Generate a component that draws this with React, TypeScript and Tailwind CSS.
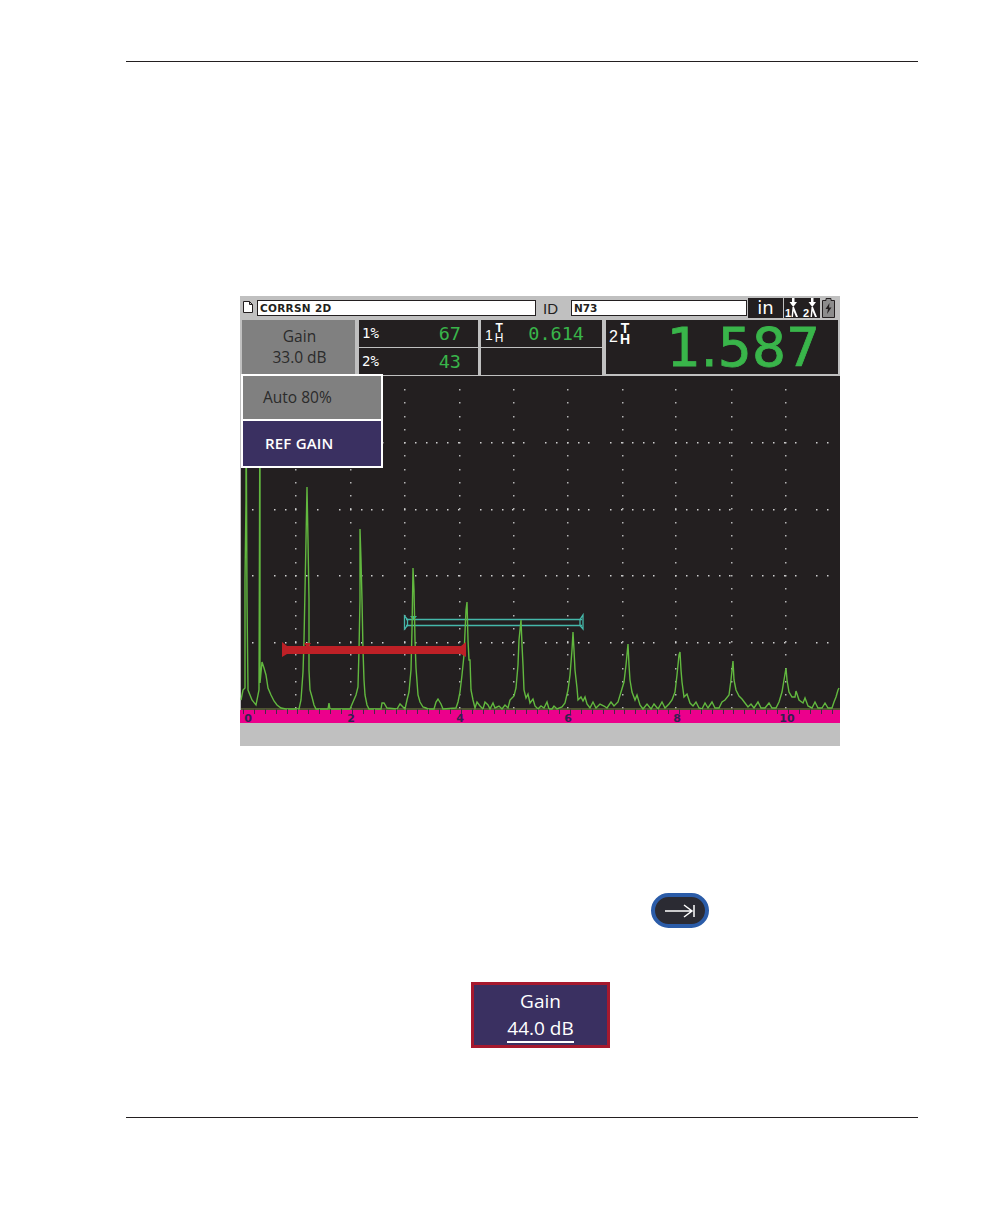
const wave = `241,700 243,690 245,688 245,580 246,500 246,376 247,600 248,690 252,700 256,705 259,690 260,376 260,683 262,662 264,668 266,675 268,688 271,695 274,701 277,705 281,708 286,709 299,709 301,700 303,672 304,640 305,590 306,540 307,487 308,540 309,600 309,670 310,690 312,697 314,705 316,709 328,709 329,703 330,709 350,709 353,702 356,695 358,687 359,650 360,600 360,529 361,560 362,600 363,650 364,680 365,695 367,705 369,709 381,709 382,703 384,703 387,708 397,709 400,704 403,707 405,709 407,700 409,692 411,670 412,630 413,568 414,590 415,640 416,668 418,695 420,702 423,707 426,708 428,709 434,709 436,702 438,699 441,704 443,709 456,708 458,702 460,692 462,675 464,655 466,610 467,602 468,640 469,660 470,660 471,690 473,700 475,708 477,702 480,706 483,709 485,702 488,705 490,709 493,703 495,708 499,706 502,709 505,705 508,708 510,700 512,698 514,696 516,688 518,665 519,640 521,620 522,645 523,665 524,690 526,698 528,694 530,703 533,699 535,706 538,709 541,706 544,708 547,702 549,709 552,709 554,706 557,709 562,707 565,703 568,690 570,675 572,650 573,632 574,650 575,670 577,688 578,700 581,697 583,701 585,697 587,704 590,708 593,702 596,708 600,704 604,706 607,708 611,702 614,706 618,702 621,692 624,682 626,665 628,644 629,665 630,680 632,692 635,700 637,695 640,705 643,709 647,704 651,709 654,704 658,709 662,702 665,708 669,704 672,700 675,692 677,675 679,655 680,652 681,670 682,682 684,697 687,694 690,703 693,706 696,702 699,708 702,709 705,703 708,708 712,702 715,708 719,708 722,702 725,700 729,695 731,680 733,661 734,680 736,690 739,696 742,699 745,703 748,707 751,704 754,708 758,702 761,708 765,708 769,703 772,708 776,708 779,702 782,692 784,680 786,668 787,680 789,692 792,697 795,697 796,691 799,700 803,703 805,698 808,706 812,708 815,702 818,708 822,708 825,703 828,708 832,708 834,702 836,697 838,690 839,688`

// grid columns and rows in page coordinates
const columns = [295, 350, 404, 459, 513, 567, 622, 675, 731, 785]
const rows = [442, 509, 575, 642]
const colDots: number[] = []
for (let y = 389; y < 708; y += 13.27) colDots.push(Math.round(y))
const skipped = [1, 7, 13, 20, 26, 32, 38, 45, 51]
const rowDots: number[] = []
for (let i = 0; i < 54; i++) {
  if (!skipped.includes(i)) rowDots.push(Math.round(252 + i * 10.85))
}
const ticks: number[] = []
for (let x = 243; x < 840; x += 10.9) ticks.push(Math.round(x))

const scaleLabels = [
  { x: 248, t: '0' },
  { x: 351, t: '2' },
  { x: 460, t: '4' },
  { x: 568, t: '6' },
  { x: 677, t: '8' },
  { x: 787, t: '10' },
]

function Plot() {
  return (
    <svg viewBox="240 376 600 370" className="block w-[600px] h-[370px]">
      <rect x="240" y="376" width="600" height="370" fill="#c0c0c0" />
      <rect x="241" y="376" width="599" height="334" fill="#231f20" />
      {columns.map((x) =>
        colDots.map((y) => <rect key={`${x}-${y}`} x={x} y={y} width="1.500" height="1.500" fill="#b5b5b5" />),
      )}
      {rows.map((y) =>
        rowDots.map((x) => <rect key={`${x}-${y}`} x={x} y={y} width="1.500" height="1.500" fill="#d0d0d0" />),
      )}
      {/* gate 2 */}
      <g fill="none" stroke="#45b8aa" strokeWidth="1.300">
        <path d="M406 619.500H582M406 625.500H582" />
        <path d="M404.500 616L407.500 619.500V625.500L404.500 629Z" />
        <path d="M583 615V629L580 625.500V619.500Z" />
      </g>
      <path d="M410 616H417L413.500 620Z" fill="#35b8aa" />
      <path d="M241 709H840" stroke="#7c8a45" strokeWidth="1" />
      <polyline points={wave} fill="none" stroke="#62b83f" strokeWidth="1.400" />
      {/* gate 1 */}
      <rect x="285" y="646" width="180" height="8" fill="#be2026" />
      <path d="M282 642L287 646V654L282 657ZM466 642L461 646V654L466 657Z" fill="#be2026" />
      <path d="M304 643H311L307.500 648Z" fill="#be2026" />
      {/* range scale */}
      <rect x="240" y="710" width="600" height="13" fill="#ec008c" />
      {ticks.map((x) => (
        <rect key={x} x={x} y="709" width="1" height="5" fill="#4a2a4a" />
      ))}
      {scaleLabels.map((l) => (
        <text
          key={l.t}
          x={l.x}
          y="722"
          textAnchor="middle"
          fontSize="11"
          fontWeight="700"
          fontFamily="'DejaVu Sans', sans-serif"
          fill="#33204f"
        >
          {l.t}
        </text>
      ))}
    </svg>
  )
}

function GateLabel({ n, big }: { n: string; big?: boolean }) {
  return (
    <div className={`flex text-white font-['Liberation_Sans',sans-serif] leading-none ${big ? 'text-[16px]' : 'text-[14px]'}`}>
      <span className={big ? 'mt-[5px]' : 'mt-[4px]'}>{n}</span>
      <span className={`flex flex-col items-center ml-[2px] ${big ? 'text-[14px]' : 'text-[12px]'}`}>
        <span className="font-bold leading-[9px]">T</span>
        <span className={big ? 'font-bold leading-[12px]' : 'leading-[11px]'}>H</span>
      </span>
    </div>
  )
}

function DepthIcons() {
  return (
    <svg viewBox="0 0 36 20" className="w-[36px] h-[20px] block">
      <rect width="36" height="20" fill="#231f20" />
      <g fill="#fff">
        <path d="M8 0h2.500v4H13L9.250 9 5.500 4H8Z" />
        <path d="M27 0h2.500v4H32L28.250 9 24.500 4H27Z" />
        <path d="M8.500 9h1.500l4 10h-2L9.500 13 9 19H7.500Z" />
        <path d="M27.500 9h1.500l4 10h-2L28.500 13 28 19h-1.500Z" />
      </g>
      <text x="1" y="19" fontSize="11" fontWeight="700" fontFamily="'Liberation Sans', sans-serif" fill="#fff">1</text>
      <text x="19" y="19" fontSize="11" fontWeight="700" fontFamily="'Liberation Sans', sans-serif" fill="#fff">2</text>
    </svg>
  )
}

export default function App() {
  return (
    <div className="relative w-[1008px] h-[1224px] bg-white pt-[61px] font-['Open_Sans',sans-serif]">
      <div className="ml-[126px] w-[792px] h-px bg-[#231f20]" />

      <div className="relative mt-[234px] ml-[240px] w-[600px] h-[450px] bg-[#c0c0c0] overflow-hidden">
        {/* top bar */}
        <div className="flex items-center h-[24px] pl-[3px] font-['DejaVu_Sans',sans-serif]">
          <svg viewBox="0 0 10 12" className="w-[10px] h-[12px] mb-[3px]">
            <path d="M.5.500H6.500L9.500 3.500V11.500H.5Z M6.500.500V3.500H9.500" fill="#fff" stroke="#231f20" />
          </svg>
          <div className="ml-[4px] w-[279px] h-[16px] bg-white border border-[#231f20] pl-[2px] text-[10.500px] leading-[14px] font-bold tracking-[0.3px] text-[#231f20]">
            CORRSN 2D
          </div>
          <span className="ml-[7px] w-[28px] text-[15px] leading-none text-[#231f20] font-['Liberation_Sans',sans-serif]">ID</span>
          <div className="w-[176px] h-[16px] bg-white border border-[#231f20] pl-[2px] text-[10.500px] leading-[14px] font-bold text-[#231f20]">
            N73
          </div>
          <div className="ml-px w-[35px] h-[20px] bg-[#231f20] text-white text-center text-[18px] leading-[20px]">in</div>
          <div className="ml-px">
            <DepthIcons />
          </div>
          <svg viewBox="0 0 13 20" className="ml-[2px] w-[13px] h-[20px]">
            <path d="M4 .500H9V2.500H12.500V19.500H.5V2.500H4Z" fill="#8c8c8c" stroke="#231f20" />
            <path d="M7.500 5L3.500 11H6L5 16L9.500 9.500H7Z" fill="#231f20" />
          </svg>
        </div>

        {/* readings */}
        <div className="flex h-[56px]">
          <div className="ml-[2px] w-[113px] h-[55px] bg-[#808080] flex flex-col items-center text-[#2b2b2b] pt-[6px] pl-[2px]">
            <span className="text-[15.500px] leading-[21px]">Gain</span>
            <span className="text-[15.500px] leading-[21px]">33.0 dB</span>
          </div>
          <div className="ml-[4px] w-[119px] h-[55px] bg-[#231f20] flex flex-col font-['DejaVu_Sans_Mono',monospace]">
            <div className="h-[28px] border-b border-[#c0c0c0] flex items-center justify-between pl-[3px] pr-[17px]">
              <span className="text-[14px] text-white">1%</span>
              <span className="text-[18.500px] text-[#39b54a]">67</span>
            </div>
            <div className="flex-1 flex items-center justify-between pl-[3px] pr-[17px]">
              <span className="text-[14px] text-white">2%</span>
              <span className="text-[18.500px] text-[#39b54a]">43</span>
            </div>
          </div>
          <div className="ml-[3px] w-[121px] h-[55px] bg-[#231f20] flex flex-col">
            <div className="h-[28px] border-b border-[#c0c0c0] flex items-center justify-between pl-[4px] pr-[18px]">
              <GateLabel n="1" />
              <span className="text-[18.500px] font-['DejaVu_Sans_Mono',monospace] text-[#39b54a]">0.614</span>
            </div>
          </div>
          <div className="ml-[4px] w-[232px] h-[54px] bg-[#231f20] flex justify-between pl-[3px] pr-[18px] pt-[4px]">
            <GateLabel n="2" big />
            <span className="-mt-[3px] text-[53.500px] leading-[54px] font-['DejaVu_Sans',sans-serif] text-[#39b54a] [-webkit-text-stroke:0.8px_#39b54a]">
              1.587
            </span>
          </div>
        </div>

        <Plot />

        {/* gain menu over the plot */}
        <div className="absolute left-[1px] top-[78px] w-[142px] h-[94px] border-2 border-white flex flex-col text-[15.500px]">
          <div className="h-[45px] bg-[#808080] border-b-2 border-white flex items-center pl-[20px] text-[#2b2b2b]">Auto 80%</div>
          <div className="flex-1 bg-[#3a3061] flex items-center pl-[22px] text-[15px] text-white font-semibold tracking-[0.2px]">REF GAIN</div>
        </div>
      </div>

      {/* front panel key */}
      <div className="mt-[147px] ml-[651px] w-[58px] h-[35px] rounded-full border-[4px] border-[#2b5ca8] bg-[#2b2b33] flex items-center justify-center">
        <svg viewBox="0 0 30 14" className="w-[30px] h-[14px]">
          <path d="M0 7H27M19 1L27 7L19 13M29 1V13" fill="none" stroke="#fff" strokeWidth="1.500" />
        </svg>
      </div>

      {/* gain parameter */}
      <div className="mt-[54px] ml-[471px] w-[139px] h-[66px] bg-[#3a3061] border-[3px] border-[#a6192e] flex flex-col items-center pt-[3px] text-white">
        <span className="text-[19px] leading-[27px]">Gain</span>
        <span className="text-[19px] leading-[26px] border-b-2 border-white">44.0 dB</span>
      </div>

      <div className="mt-[69px] ml-[126px] w-[792px] h-px bg-[#231f20]" />
    </div>
  )
}
